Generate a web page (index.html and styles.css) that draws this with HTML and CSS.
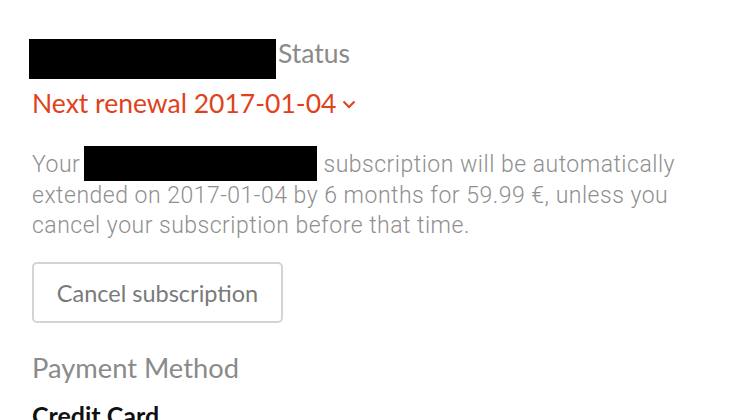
FILE: index.html
```html
<!DOCTYPE html>
<html>
<head>
<meta charset="utf-8">
<link rel="stylesheet" href="styles.css">
</head>
<body>
<div class="page">
  <div class="status-title"><span class="redact redact-title"></span><span class="status-word">Status</span></div>
  <div class="renewal">Next renewal 2017-01-04 <svg class="chev" width="14" height="9" viewBox="0 0 14 9"><path d="M1.5 1.5 L7 7 L12.5 1.5" fill="none" stroke="#e0421c" stroke-width="2"/></svg></div>
  <p class="desc">Your <span class="redact redact-inline"></span> subscription will be automatically extended on 2017-01-04 by 6 months for 59.99 €, unless you cancel your subscription before that time.</p>
  <button class="btn">Cancel subscription</button>
  <div class="section-title">Payment Method</div>
  <div class="card">Credit Card</div>
</div>
</body>
</html>
```
FILE: styles.css
```css
html, body { margin: 0; padding: 0; background: #fff; }
.page {
  padding: 39px 0 0 32px;
  font-family: Lato, "Liberation Sans", sans-serif;
  width: 680px;
}
.status-title {
  display: flex;
  align-items: flex-start;
  height: 40px;
  margin-left: -3px;
}
.redact { display: inline-block; background: #000; }
.redact-title { width: 247px; height: 40px; }
.status-word {
  font-size: 26.5px;
  color: #8a8a8a;
  line-height: 28px;
  margin-left: 2px;
}
.renewal {
  margin-top: 7px;
  font-size: 26.5px;
  color: #e0421c;
  line-height: 34px;
  display: flex;
  align-items: center;
}
.chev { margin-left: 6px; margin-top: 2px; }
.desc {
  margin: 26px 0 0 0;
  max-width: 648px;
  font-family: Roboto, "Liberation Sans", sans-serif;
  font-weight: 300;
  font-size: 23px;
  letter-spacing: 0.5px;
  line-height: 30px;
  color: #8f8f8f;
}
.redact-inline { width: 233px; height: 35px; vertical-align: -9px; margin-left: -2px; }
.btn {
  display: block;
  margin-top: 21px;
  width: 251px;
  height: 61px;
  border: 2px solid #d4d4d4;
  border-radius: 5px;
  background: #fff;
  font-family: Lato, "Liberation Sans", sans-serif;
  font-size: 23.5px;
  color: #7a7a7a;
  padding: 0;
}
.section-title {
  margin-top: 29px;
  font-size: 27.3px;
  color: #8a8a8a;
  line-height: 32px;
}
.card {
  margin-top: 16px;
  font-size: 25px;
  font-weight: 700;
  color: #111;
  line-height: 30px;
}
```
